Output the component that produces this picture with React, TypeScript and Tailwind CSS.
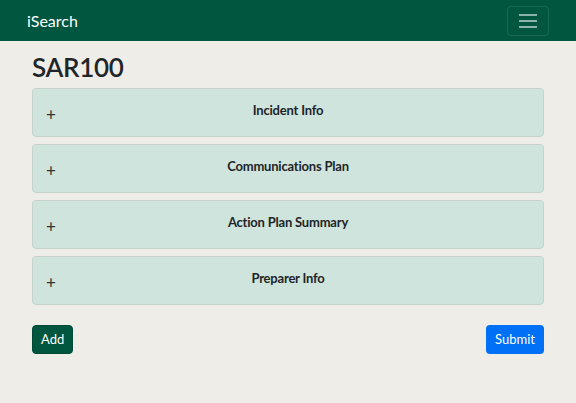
const sections = ["Incident Info", "Communications Plan", "Action Plan Summary", "Preparer Info"];

export default function App() {
  return (
    <div className="min-h-[403px] bg-[#efede8] font-['Lato',sans-serif] text-[#212529]">
      {/* Navbar */}
      <nav className="flex h-[41px] items-center justify-between bg-[#00563f] pl-[27px] pr-[27px]">
        <span className="text-[16px] text-white">iSearch</span>
        <button className="flex h-[30px] w-[42px] flex-col items-center justify-center gap-[4px] rounded-[4px] border border-white/10">
          <span className="h-[2px] w-[18px] bg-white/55" />
          <span className="h-[2px] w-[18px] bg-white/55" />
          <span className="h-[2px] w-[18px] bg-white/55" />
        </button>
      </nav>

      <main className="px-[32px] pt-[10px]">
        <h1 className="mb-[5px] text-[26px] font-semibold leading-[32px] tracking-[-0.3px]">SAR100</h1>

        {/* Accordion */}
        <div className="flex flex-col gap-[7px]">
          {sections.map((s) => (
            <div
              key={s}
              className="grid h-[49px] grid-cols-[40px_1fr_40px] items-center rounded-[4px] border border-[#c4d4cc] bg-[#cfe4dc]"
            >
              <span className="pl-[13px] pt-[4px] text-[17px] leading-none text-[#2f3431]">+</span>
              <span className="pb-[4px] text-center text-[13px] font-bold tracking-[-0.2px]">{s}</span>
              <span />
            </div>
          ))}
        </div>

        <div className="mt-[20px] flex items-center justify-between">
          <button className="h-[29px] rounded-[4px] border border-[#004a36] bg-[#00563f] px-[8px] text-[13px] text-white">
            Add
          </button>
          <button className="h-[29px] rounded-[4px] bg-[#0070f6] px-[9px] text-[13px] text-white">
            Submit
          </button>
        </div>
      </main>
    </div>
  );
}
